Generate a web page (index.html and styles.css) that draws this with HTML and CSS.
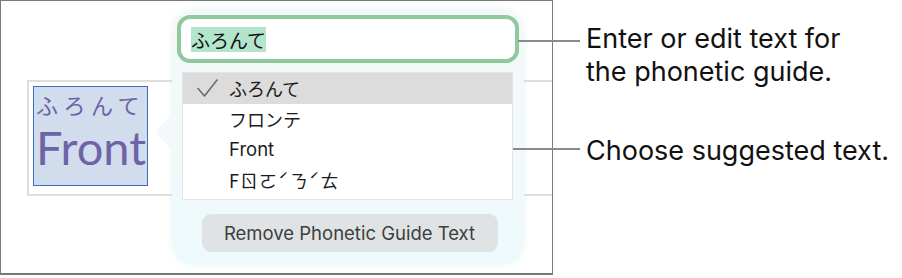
FILE: index.html
```html
<!DOCTYPE html>
<html lang="en">

<head>
    <meta charset="UTF-8">
    <meta name="viewport" content="width=device-width, initial-scale=1.0">
    <title>Phonetic Guide</title>
    <link rel="stylesheet" href="styles.css">
</head>

<body>
    <div class="figure">
        <div class="canvas">
            <div class="doc-box">
                <div class="selection">
                    <div class="ruby">ふろんて</div>
                    <div class="base">Front</div>
                </div>
            </div>

            <div class="popover">
                <div class="popover-arrow"></div>
                <div class="field">
                    <span class="field-text">ふろんて</span>
                </div>
                <ul class="suggestions">
                    <li class="suggestion selected">
                        <svg class="check" width="22" height="22" viewBox="0 0 22 22">
                            <path d="M2 9.5 L8.5 17 L21 1" fill="none" stroke="#6b6b6b" stroke-width="1.6" stroke-linecap="round" stroke-linejoin="round"/>
                        </svg>
                        <span class="jp">ふろんて</span>
                    </li>
                    <li class="suggestion"><span class="jp">フロンテ</span></li>
                    <li class="suggestion">Front</li>
                    <li class="suggestion"><span class="jp bopomofo">Fㄖㄛˊㄋˊㄊ</span></li>
                </ul>
                <button class="remove-button">Remove Phonetic Guide Text</button>
            </div>
        </div>

        <div class="callouts">
            <div class="callout first">Enter or edit text for<br>the phonetic guide.</div>
            <div class="callout second">Choose suggested text.</div>
        </div>

        <div class="leader leader-one"></div>
        <div class="leader leader-two"></div>
    </div>
</body>
</html>
```

FILE: styles.css
```css
* {
    box-sizing: border-box;
}

body {
    margin: 0;
    background-color: #ffffff;
    font-family: Inter, "Noto Sans", sans-serif;
}

.figure {
    position: relative;
    display: flex;
    width: 902px;
    height: 278px;
}

.canvas {
    position: relative;
    width: 553px;
    height: 275px;
    border: 1px solid #7a7a7a;
    border-bottom-width: 2px;
    padding-top: 79px;
    padding-left: 26px;
    display: flex;
    align-items: flex-start;
    overflow: hidden;
}

.doc-box {
    flex: 1;
    height: 116px;
    border: 2px solid #dedede;
    border-right: none;
    padding: 4px;
}

.selection {
    width: 115px;
    height: 100px;
    background-color: #d1dced;
    border: 1.5px solid #3b6fbf;
    color: #6f62a6;
    overflow: hidden;
    padding-left: 2px;
}

.ruby {
    font-family: "Noto Sans CJK JP", sans-serif;
    font-size: 22px;
    line-height: 30px;
    letter-spacing: 5.5px;
    margin-top: 2px;
    white-space: nowrap;
}

.base {
    font-family: Lato, sans-serif;
    font-size: 47px;
    line-height: 56px;
    white-space: nowrap;
}

.popover {
    position: absolute;
    left: 171px;
    top: 8px;
    width: 352px;
    height: 256px;
    border-radius: 22px;
    background: linear-gradient(180deg, #f5f8f9 0%, #f1f9fb 60%, #edfafd 100%);
    box-shadow: 0 0 6px rgba(200, 225, 230, 0.35);
    padding: 6px 10px 0 5px;
    display: flex;
    flex-direction: column;
}

.popover-arrow {
    position: absolute;
    left: -12px;
    top: 110px;
    width: 26px;
    height: 26px;
    background-color: #f3f9fa;
    transform: rotate(45deg);
    border-radius: 6px;
}

.field {
    position: relative;
    width: 342px;
    height: 48px;
    border: 4px solid #8fca9d;
    border-radius: 13px;
    background-color: #ffffff;
    padding-left: 10px;
    display: flex;
    align-items: center;
}

.field-text {
    font-family: "Noto Sans CJK JP", sans-serif;
    font-size: 19px;
    line-height: 25px;
    color: #111111;
    background-color: #b3e5cb;
}

.suggestions {
    position: relative;
    list-style: none;
    margin: 9px 0 0 5px;
    padding: 0;
    width: 331px;
    height: 128px;
    background-color: #ffffff;
    border: 1px solid #e4e4e4;
}

.suggestion {
    position: relative;
    height: 30.5px;
    display: flex;
    align-items: center;
    padding-left: 46px;
    font-size: 18.5px;
    color: #1c1c1c;
}

.suggestion.selected {
    background-color: #dcdcdc;
}

.jp {
    font-family: "Noto Sans CJK JP", sans-serif;
    font-size: 18px;
}

.bopomofo {
    letter-spacing: 1px;
}

.check {
    position: absolute;
    left: 13px;
    top: 6px;
}

.remove-button {
    align-self: center;
    margin-top: 14px;
    margin-left: 8px;
    width: 296px;
    height: 38px;
    border: none;
    border-radius: 9px;
    background-color: #dfe3e4;
    font-family: Inter, sans-serif;
    font-size: 18.5px;
    color: #3e3e3e;
}

.callouts {
    display: flex;
    flex-direction: column;
    padding-top: 22px;
    padding-left: 33px;
    font-size: 27px;
    line-height: 33px;
    color: #111111;
}

.callout.second {
    margin-top: 46px;
}

.leader {
    position: absolute;
    height: 2px;
    background-color: #8a8a8a;
}

.leader-one {
    left: 518px;
    top: 40px;
    width: 62px;
}

.leader-two {
    left: 513px;
    top: 148px;
    width: 67px;
}
```
